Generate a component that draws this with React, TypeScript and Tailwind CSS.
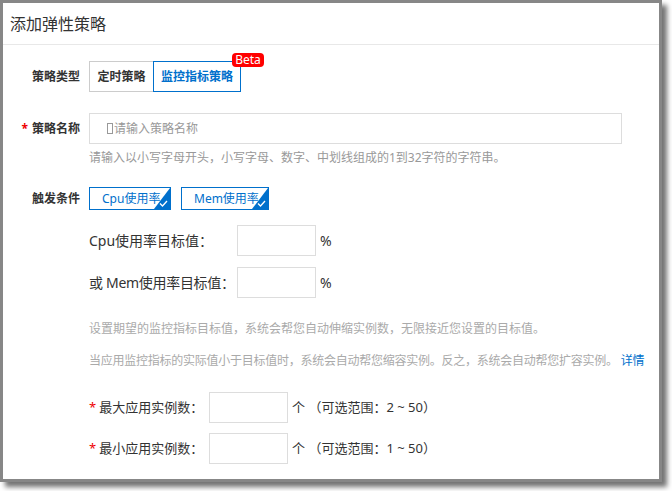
import React from "react";

const font = { fontFamily: '"Noto Sans", "Noto Sans CJK SC", sans-serif' };

function Label({ children, required }: { children: React.ReactNode; required?: boolean }) {
  return (
    <div className="w-[77px] shrink-0 pr-0 text-right text-[12px] font-bold text-[#333] leading-none">
      {required && <span className="mr-[4px] text-[#e00]">*</span>}
      {children}
    </div>
  );
}

function Check({ text, width }: { text: string; width: string }) {
  return (
    <div className={`relative flex h-[23px] ${width} items-center border border-[#0070cc] pl-[12px] text-[12px] text-[#0070cc]`}>
      {text}
      <svg className="absolute right-0 bottom-0" width="16" height="21" viewBox="0 0 16 21">
        <polygon points="16,0 16,21 0,21" fill="#0070cc" />
        <path d="M6 15.5 L8.5 18 L13 13" stroke="#fff" strokeWidth="1.3" fill="none" />
      </svg>
    </div>
  );
}

export default function App() {
  return (
    <div className="h-[491px] w-[672px] bg-white" style={font}>
      <div className="h-[482px] w-[662px] overflow-hidden border-[3px] border-[#878787] bg-white shadow-[5px_5px_5px_rgba(0,0,0,0.55)]">
        <div className="flex h-[42px] items-center border-b border-[#e8e8e8] pl-[7px] text-[16px] text-[#333]">添加弹性策略</div>

        <div className="pt-[16px]">
          {/* 策略类型 */}
          <div className="flex items-center">
            <Label>策略类型</Label>
            <div className="ml-[9px] flex h-[31px]">
              <div className="flex w-[64px] items-center justify-center border border-r-0 border-[#ccc] text-[12px] font-bold text-[#333]">定时策略</div>
              <div className="relative flex w-[88px] items-center justify-center border border-[#0070cc] text-[12px] font-bold text-[#0070cc]">
                监控指标策略
                <span className="absolute left-[78px] top-[-9px] flex h-[14px] w-[32px] items-center justify-center rounded-[4px] bg-[#f00] text-[12px] font-normal text-white">Beta</span>
              </div>
            </div>
          </div>

          {/* 策略名称 */}
          <div className="mt-[21px] flex items-center">
            <Label required>策略名称</Label>
            <div className="ml-[9px] flex h-[31px] w-[533px] items-center border border-[#ddd] pl-[17px] text-[12px] text-[#999]">
              <span className="mr-[1px] inline-block h-[11px] w-[6px] border border-[#999]" />
              请输入策略名称
            </div>
          </div>
          <div className="mt-[5px] pl-[86px] text-[12px] leading-[18px] text-[#999]">请输入以小写字母开头，小写字母、数字、中划线组成的1到32字符的字符串。</div>

          {/* 触发条件 */}
          <div className="mt-[20px] flex items-center">
            <Label>触发条件</Label>
            <div className="ml-[9px] flex gap-[10px]">
              <Check text="Cpu使用率" width="w-[82px]" />
              <Check text="Mem使用率" width="w-[88px]" />
            </div>
          </div>

          <div className="mt-[15px] flex items-center whitespace-nowrap pl-[86px] text-[14px] text-[#333]">
            <div className="w-[148px] shrink-0">Cpu使用率目标值：</div>
            <div className="h-[31px] w-[79px] border border-[#ddd]" />
            <span className="ml-[4px]">%</span>
          </div>
          <div className="mt-[11px] flex items-center whitespace-nowrap pl-[86px] text-[14px] text-[#333]">
            <div className="w-[148px] shrink-0 tracking-[-0.3px]">或 Mem使用率目标值：</div>
            <div className="h-[31px] w-[79px] border border-[#ddd]" />
            <span className="ml-[4px]">%</span>
          </div>

          <div className="mt-[22px] whitespace-nowrap pl-[86px] text-[12px] leading-[18px] text-[#aaa]">设置期望的监控指标目标值，系统会帮您自动伸缩实例数，无限接近您设置的目标值。</div>
          <div className="mt-[14px] whitespace-nowrap pl-[86px] text-[12px] leading-[18px] tracking-[-0.25px] text-[#aaa]">
            当应用监控指标的实际值小于目标值时，系统会自动帮您缩容实例。反之，系统会自动帮您扩容实例。<span className="ml-[3px] text-[#0070cc]">详情</span>
          </div>

          <div className="mt-[22px] flex items-center whitespace-nowrap pl-[86px] text-[13px] text-[#333]">
            <div className="w-[120px] shrink-0"><span className="mr-[3px] text-[#e00]">*</span>最大应用实例数：</div>
            <div className="h-[31px] w-[79px] border border-[#ddd]" />
            <span className="ml-[4px]">个 （可选范围：2 ~ 50）</span>
          </div>
          <div className="mt-[10px] flex items-center whitespace-nowrap pl-[86px] text-[13px] text-[#333]">
            <div className="w-[120px] shrink-0"><span className="mr-[3px] text-[#e00]">*</span>最小应用实例数：</div>
            <div className="h-[31px] w-[79px] border border-[#ddd]" />
            <span className="ml-[4px]">个 （可选范围：1 ~ 50）</span>
          </div>
        </div>
      </div>
    </div>
  );
}
